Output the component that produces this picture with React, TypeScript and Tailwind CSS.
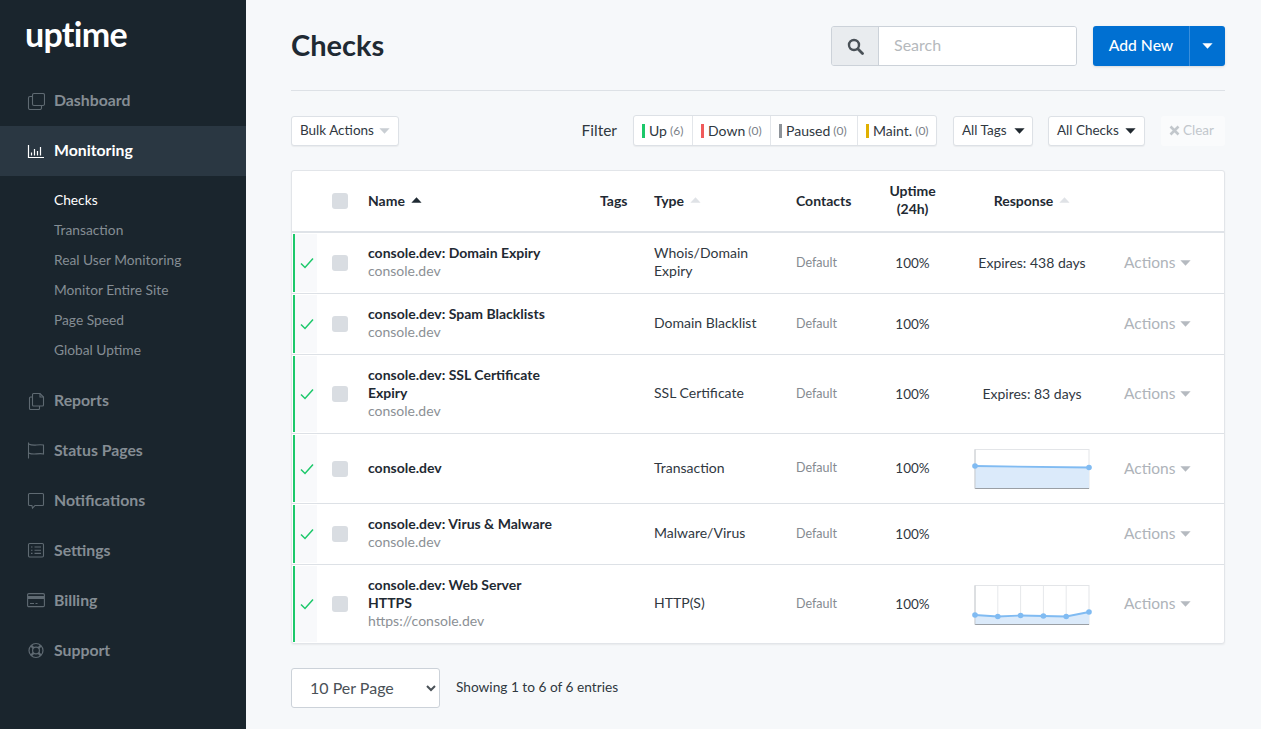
import React from "react";

const font = "[font-family:Lato,'Liberation_Sans',sans-serif]";

function Caret({ className = "", up = false }: { className?: string; up?: boolean }) {
  return (
    <svg width="11" height="6" viewBox="0 0 11 6" className={className} fill="currentColor">
      {up ? <path d="M5.5 0.3 L10.6 5.7 L0.4 5.7 Z" /> : <path d="M0.4 0.3 L10.6 0.3 L5.5 5.7 Z" />}
    </svg>
  );
}

const stroke = { fill: "none", stroke: "currentColor", strokeWidth: 1.1 };

const icons: Record<string, React.ReactNode> = {
  Dashboard: (
    <g {...stroke}>
      <rect x="5.5" y="1.5" width="12" height="12" rx="1.5" />
      <path d="M5 4.5H3A1.5 1.5 0 0 0 1.5 6v10A1.5 1.5 0 0 0 3 17.5h10a1.5 1.5 0 0 0 1.5-1.5v-2" />
    </g>
  ),
  Monitoring: (
    <g fill="none" stroke="currentColor" strokeWidth="1.2">
      <path d="M1.5 3v12.5H17" />
      <path d="M4.5 10.5v3M7.5 7v6.5M10.5 9v4.5M13.5 5v8.5" />
    </g>
  ),
  Reports: (
    <g {...stroke}>
      <path d="M6.5 1.5H13l3.5 3.5v8a1 1 0 0 1-1 1H6.5a1 1 0 0 1-1-1V2.5a1 1 0 0 1 1-1z" />
      <path d="M13 1.5V5h3.5" />
      <path d="M5.5 5H3.5a1 1 0 0 0-1 1v10.5a1 1 0 0 0 1 1h8a1 1 0 0 0 1-1V14" />
    </g>
  ),
  "Status Pages": (
    <g {...stroke}>
      <path d="M1.5 0.5v16" />
      <path d="M1.5 2c3 1.4 5 1.4 8 1s5-.6 7 .1V12c-2-.7-4-.5-7-.1s-5 .4-8-1" />
    </g>
  ),
  Notifications: (
    <g {...stroke}>
      <path d="M2.5 1.5h13a1 1 0 0 1 1 1v10a1 1 0 0 1-1 1H8l-2.5 2.7-.6-2.7H2.5a1 1 0 0 1-1-1v-10a1 1 0 0 1 1-1z" />
    </g>
  ),
  Settings: (
    <g {...stroke}>
      <rect x="1.5" y="1.5" width="15" height="13.5" rx="1.2" />
      <path d="M4 5h1.5M7.5 5H14M4 8.2h1.5M7.5 8.2H14M4 11.4h1.5M7.5 11.4H14" />
    </g>
  ),
  Billing: (
    <g>
      <rect x="0.6" y="1.6" width="16.8" height="13" rx="1.2" fill="none" stroke="currentColor" strokeWidth="1.1" />
      <rect x="1" y="4" width="16" height="3" fill="currentColor" />
      <path d="M3 11.5h4M8.5 11.5h2" stroke="currentColor" strokeWidth="1.1" />
    </g>
  ),
  Support: (
    <g fill="none" stroke="currentColor" strokeWidth="1.2">
      <circle cx="9" cy="8.5" r="7" />
      <circle cx="9" cy="8.5" r="3.4" />
      <path d="M4 3.5l2.6 2.6M14 3.5l-2.6 2.6M4 13.5l2.6-2.6M14 13.5l-2.6-2.6" strokeWidth="2.2" />
    </g>
  ),
};

function NavItem({ label, active = false }: { label: string; active?: boolean }) {
  return (
    <div className={`flex h-[50px] items-center pl-[27px] ${active ? "bg-[#2a3742] text-white" : "text-[#858d94]"}`}>
      <svg width="18" height="18" viewBox="0 0 18 18" className={`mr-[9px] shrink-0 ${active ? "" : "text-[#5f6a72]"}`}>
        {icons[label]}
      </svg>
      <span className="-translate-y-px text-[15.8px] font-bold">{label}</span>
    </div>
  );
}

function Sidebar() {
  const subs = ["Checks", "Transaction", "Real User Monitoring", "Monitor Entire Site", "Page Speed", "Global Uptime"];
  return (
    <aside className="w-[246px] shrink-0 bg-[#1a252d]">
      <div className="flex h-[76px] items-start pl-[25px] pt-[12px] text-[34px] leading-[44px] font-bold tracking-[-0.7px] text-white">
        uptime
      </div>
      <NavItem label="Dashboard" />
      <NavItem label="Monitoring" active />
      <div className="pt-[9px] pb-[11px]">
        {subs.map((s, i) => (
          <div key={s} className={`flex h-[30px] items-center pl-[54px] text-[13.75px] ${i === 0 ? "text-white" : "text-[#858d94]"}`}>
            {s}
          </div>
        ))}
      </div>
      {["Reports", "Status Pages", "Notifications", "Settings", "Billing", "Support"].map((l) => (
        <NavItem key={l} label={l} />
      ))}
    </aside>
  );
}

function Header() {
  return (
    <div className="flex h-[66px] items-start border-b border-[#dde1e6] pt-[1px]">
      <h1 className="text-[29px] leading-[38px] font-bold text-[#1f2a33]">Checks</h1>
      <div className="ml-auto flex h-[40px] w-[246px] overflow-hidden rounded-[3px] border border-[#ccd2d9]">
        <div className="flex w-[47px] items-center justify-center border-r border-[#ccd2d9] bg-[#e9ecef] text-[#4a5157]">
          <svg width="17" height="17" viewBox="0 0 17 17" fill="none" stroke="currentColor">
            <circle cx="7" cy="7" r="5" strokeWidth="2.4" />
            <path d="M11 11l4.5 4.5" strokeWidth="2.8" strokeLinecap="round" />
          </svg>
        </div>
        <div className="flex flex-1 items-center bg-white pb-[2px] pl-[15px] text-[16px] text-[#b5b9bd]">Search</div>
      </div>
      <div className="ml-[16px] flex h-[40px] w-[132px] rounded-[3px] bg-[#0070d2] text-white shadow-sm">
        <div className="flex w-[96px] items-center justify-center text-[15.7px] font-medium">Add New</div>
        <div className="flex flex-1 items-center justify-center border-l border-[#3a8fdc]">
          <Caret />
        </div>
      </div>
    </div>
  );
}

function Chip({ color, label, count, w, last }: { color: string; label: string; count: number; w: string; last?: boolean }) {
  return (
    <div className={`flex h-full items-center pl-[8px] ${w} ${last ? "" : "border-r border-[#e3e6ea]"}`}>
      <span className={`mr-[4px] h-[14px] w-[3px] ${color}`} />
      <span className="text-[#30383f]">{label}</span>
      <span className="ml-[3px] text-[12px] text-[#7b8187]">({count})</span>
    </div>
  );
}

function Toolbar() {
  const btn = "flex h-[30px] items-center rounded-[3px] border border-[#dde1e6] bg-white text-[13.5px] text-[#30383f] shadow-[0_1px_1px_rgba(0,0,0,0.05)]";
  return (
    <div className="mt-[24px] flex items-center">
      <div className={`${btn} w-[108px] pl-[8px]`}>
        Bulk Actions
        <Caret className="ml-[5px] text-[#c9ced3]" />
      </div>
      <span className="ml-auto text-[15.5px] text-[#30383f]">Filter</span>
      <div className="ml-[16px] flex h-[31px] w-[304px] items-center rounded-[3px] border border-[#dde1e6] bg-white text-[14px] shadow-[0_1px_1px_rgba(0,0,0,0.05)]">
        <Chip color="bg-[#1cc86a]" label="Up" count={6} w="w-[59px]" />
        <Chip color="bg-[#f05a5a]" label="Down" count={0} w="w-[78px]" />
        <Chip color="bg-[#8e9399]" label="Paused" count={0} w="w-[87px]" />
        <Chip color="bg-[#e0b000]" label="Maint." count={0} w="flex-1" last />
      </div>
      <div className={`${btn} ml-[16px] w-[80px] pl-[8px]`}>
        All Tags
        <Caret className="ml-[7px] text-[#20282f]" />
      </div>
      <div className={`${btn} ml-[15px] w-[97px] pl-[8px]`}>
        All Checks
        <Caret className="ml-[6px] text-[#20282f]" />
      </div>
      <div className="ml-[16px] flex h-[30px] w-[64px] items-center rounded-[3px] bg-[#fafbfc] pl-[8px] text-[13.5px] text-[#c2c7cc]">
        <svg width="11" height="11" viewBox="0 0 11 11" className="mr-[3px]" stroke="currentColor" strokeWidth="2.6">
          <path d="M1.5 1.5l8 8M9.5 1.5l-8 8" />
        </svg>
        Clear
      </div>
    </div>
  );
}

function Chart({ pts, grid }: { pts: number[]; grid?: boolean }) {
  const xs = pts.map((_, i) => 5 + (i * 114) / (pts.length - 1));
  const line = pts.map((y, i) => `${xs[i]},${y}`).join(" ");
  return (
    <svg width="125" height="45" viewBox="0 0 125 45" className="mx-auto block">
      <rect x="5" y="3.5" width="114" height="39" fill="#fff" stroke="#e3e5e8" />
      {grid && xs.slice(1, -1).map((x) => <path key={x} d={`M${x} 3.5V42.5`} stroke="#e6e8eb" />)}
      <polygon points={`5,42 ${line} 119,42`} fill="#dbeafa" />
      <path d="M5 42.5H119" stroke="#9a9fa5" />
      <path d="M5 3.5V42.5" stroke="#c8ccd0" />
      <polyline points={line} fill="none" stroke="#80bbf2" strokeWidth="1.8" />
      {xs.map((x, i) => (
        <circle key={x} cx={x} cy={pts[i]} r="2.8" fill="#80bbf2" />
      ))}
    </svg>
  );
}

const grid = "grid grid-cols-[25px_51px_232px_54px_142px_79px_75px_164px_110px] items-center";

type Row = { name: string; sub?: string; type: string; resp?: React.ReactNode };

const rows: Row[] = [
  { name: "console.dev: Domain Expiry", sub: "console.dev", type: "Whois/Domain Expiry", resp: "Expires: 438 days" },
  { name: "console.dev: Spam Blacklists", sub: "console.dev", type: "Domain Blacklist" },
  { name: "console.dev: SSL Certificate Expiry", sub: "console.dev", type: "SSL Certificate", resp: "Expires: 83 days" },
  { name: "console.dev", type: "Transaction", resp: <Chart pts={[20, 21.5]} /> },
  { name: "console.dev: Virus & Malware", sub: "console.dev", type: "Malware/Virus" },
  {
    name: "console.dev: Web Server HTTPS",
    sub: "https://console.dev",
    type: "HTTP(S)",
    resp: <Chart grid pts={[33, 34.5, 33.5, 34, 34.5, 30]} />,
  },
];

function Checkbox() {
  return <div className="h-[16px] w-[16px] rounded-[3px] bg-[#d9dde2]" />;
}

function TableRow({ r, last }: { r: Row; last: boolean }) {
  return (
    <div className={`${grid} relative py-[12px] ${last ? "" : "border-b border-[#dde1e6]"}`}>
      <div className="absolute top-[1px] bottom-[1px] left-[1px] flex w-[24px] items-center border-l-2 border-[#1cc86a] bg-[#f8f9fb] pl-[5px] text-[#1cc86a]">
        <svg width="14" height="12" viewBox="0 0 14 12" fill="none" stroke="currentColor" strokeWidth="1.5">
          <path d="M1 6.5l4 4L13 1.5" />
        </svg>
      </div>
      <div />
      <div className="pl-[15px]"><Checkbox /></div>
      <div className="-translate-y-px pr-[40px] text-[14px] leading-[18px]">
        <div className="font-bold text-[#1f2a33]">{r.name}</div>
        {r.sub && <div className="text-[#8b9095]">{r.sub}</div>}
      </div>
      <div />
      <div className="-translate-y-px pr-[30px] text-[14px] leading-[18px] text-[#30383f]">{r.type}</div>
      <div className="text-[12.5px] text-[#858a90]">Default</div>
      <div className="text-center text-[13.5px] text-[#30383f]">100%</div>
      <div className={`text-center text-[14px] text-[#30383f] ${typeof r.resp === "string" ? "-translate-y-px" : ""}`}>{r.resp}</div>
      <div className="flex items-center pl-[10px] text-[15.5px] text-[#aeb3b9]">
        Actions
        <Caret className="ml-[5px] text-[#b5bac0]" />
      </div>
    </div>
  );
}

function Table() {
  return (
    <div className="mt-[24px] overflow-hidden rounded-[3px] border border-[#e2e5e9] bg-white shadow-[0_1px_2px_rgba(0,0,0,0.06)]">
      <div className={`${grid} h-[62px] border-b-2 border-[#dfe3e8] text-[14px] font-bold text-[#1f2a33]`}>
        <div />
        <div className="pl-[15px]"><Checkbox /></div>
        <div className="flex -translate-y-px items-center">
          Name
          <Caret up className="ml-[6px] text-[#1f2a33]" />
        </div>
        <div className="-translate-y-px">Tags</div>
        <div className="flex -translate-y-px items-center">
          Type
          <Caret up className="ml-[6px] text-[#dfe2e6]" />
        </div>
        <div className="-translate-y-px">Contacts</div>
        <div className="-translate-y-px text-center leading-[18px]">Uptime<br />(24h)</div>
        <div className="flex -translate-y-px items-center justify-center">
          Response
          <Caret up className="ml-[6px] text-[#dfe2e6]" />
        </div>
        <div />
      </div>
      {rows.map((r, i) => (
        <TableRow key={r.name} r={r} last={i === rows.length - 1} />
      ))}
    </div>
  );
}

function Footer() {
  return (
    <div className="mt-[24px] flex items-center">
      <select className="h-[40px] w-[149px] rounded-[3px] border border-[#ccd2d9] bg-white pb-[2px] pl-[14px] text-[16px] text-[#4a5157]">
        <option>10 Per Page</option>
      </select>
      <span className="ml-[16px] -translate-y-px text-[13.7px] text-[#30383f]">Showing 1 to 6 of 6 entries</span>
    </div>
  );
}

export default function App() {
  return (
    <div className={`flex h-[729px] w-[1261px] overflow-hidden bg-[#f6f8fa] ${font}`}>
      <Sidebar />
      <main className="flex-1 pt-[25px] pr-[36px] pl-[45px]">
        <Header />
        <Toolbar />
        <Table />
        <Footer />
      </main>
    </div>
  );
}
